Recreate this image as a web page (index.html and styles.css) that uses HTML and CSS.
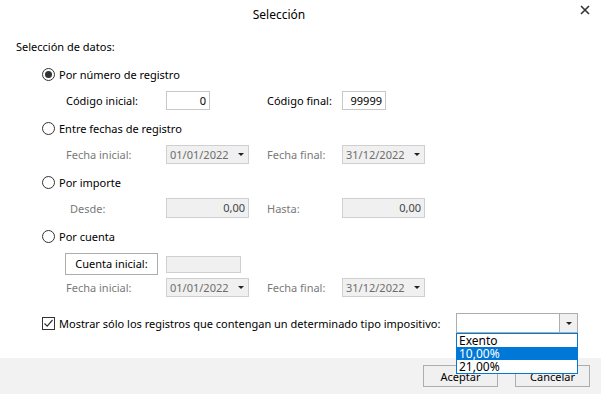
FILE: index.html
```html
<!DOCTYPE html>
<html lang="es">
<head>
    <meta charset="UTF-8">
    <title>Selección</title>
    <link rel="stylesheet" href="styles.css">
</head>
<body>
    <div class="dialog">
        <div class="titlebar">
            <span class="title">Selección</span>
            <span class="close">
                <svg width="10" height="10" viewBox="0 0 10 10"><path d="M1 1L9 9M9 1L1 9" stroke="#333" stroke-width="1.6"/></svg>
            </span>
        </div>

        <div class="content">
            <div class="section-label">Selección de datos:</div>

            <div class="option"><span class="radio checked"></span>Por número de registro</div>
            <div class="fields">
                <span class="field-label">Código inicial:</span>
                <span class="input code">0</span>
                <span class="field-label">Código final:</span>
                <span class="input code">99999</span>
            </div>

            <div class="option"><span class="radio"></span>Entre fechas de registro</div>
            <div class="fields disabled">
                <span class="field-label">Fecha inicial:</span>
                <span class="date">01/01/2022<i class="caret"></i></span>
                <span class="field-label">Fecha final:</span>
                <span class="date">31/12/2022<i class="caret"></i></span>
            </div>

            <div class="option"><span class="radio"></span>Por importe</div>
            <div class="fields disabled">
                <span class="field-label indent">Desde:</span>
                <span class="input amount">0,00</span>
                <span class="field-label">Hasta:</span>
                <span class="input amount">0,00</span>
            </div>

            <div class="option"><span class="radio"></span>Por cuenta</div>
            <div class="fields account">
                <span class="btn-account">Cuenta inicial:</span>
                <span class="input account-input"></span>
            </div>
            <div class="fields disabled tight">
                <span class="field-label">Fecha inicial:</span>
                <span class="date">01/01/2022<i class="caret"></i></span>
                <span class="field-label">Fecha final:</span>
                <span class="date">31/12/2022<i class="caret"></i></span>
            </div>

            <div class="check-row">
                <span class="checkbox">
                    <svg width="11" height="11" viewBox="0 0 11 11"><path d="M1.5 5.5L4.2 8.2L9.5 2" fill="none" stroke="#333" stroke-width="1.2"/></svg>
                </span>
                <span class="check-label">Mostrar sólo los registros que contengan un determinado tipo impositivo:</span>
                <div class="combo">
                    <span class="combo-value"></span>
                    <span class="combo-btn"><i class="caret"></i></span>
                    <ul class="combo-list">
                        <li>Exento</li>
                        <li class="selected">10,00%</li>
                        <li>21,00%</li>
                    </ul>
                </div>
            </div>
        </div>

        <div class="footer">
            <button class="btn">Aceptar</button>
            <button class="btn">Cancelar</button>
        </div>
    </div>
</body>
</html>
```

FILE: styles.css
```css
body {
    margin: 0;
    font-family: "Noto Sans", "Open Sans", sans-serif;
    font-size: 11px;
    color: #000;
    background-color: white;
}
.dialog {
    width: 601px;
    height: 394px;
    overflow: hidden;
    display: flex;
    flex-direction: column;
}
.titlebar {
    height: 28px;
    display: flex;
    align-items: center;
    position: relative;
}
.title {
    flex: 1;
    text-align: center;
    padding-right: 43px;
    font-size: 12px;
}
.close {
    position: absolute;
    right: 11px;
    top: 3px;
}
.content {
    padding-left: 16px;
    flex: 1;
}
.section-label {
    height: 36px;
    display: flex;
    align-items: center;
}
.option {
    height: 20px;
    display: flex;
    align-items: center;
    gap: 4px;
    margin-left: 26px;
    margin-top: 8px;
}
.section-label + .option {
    margin-top: 0;
}
.radio {
    width: 11px;
    height: 11px;
    border: 1px solid #333;
    border-radius: 50%;
    position: relative;
}
.radio.checked::after {
    content: "";
    position: absolute;
    left: 2px;
    top: 2px;
    width: 7px;
    height: 7px;
    border-radius: 50%;
    background-color: #333;
}
.fields {
    display: grid;
    grid-template-columns: 100px 101px 75px auto;
    align-items: center;
    height: 20px;
    margin-left: 50px;
    margin-top: 6px;
}
.fields.disabled .field-label {
    color: #7a7a7a;
}
.fields.tight {
    margin-top: 2px;
}
.field-label.indent {
    padding-left: 4px;
}
.input {
    box-sizing: border-box;
    height: 19px;
    border: 1px solid #c8c8c8;
    text-align: right;
    padding-right: 3px;
    line-height: 17px;
}
.input.code {
    width: 44px;
}
.input.amount {
    width: 83px;
    height: 20px;
    line-height: 18px;
    background-color: #f0f0f0;
    border-color: #cfcfcf;
    color: #444;
}
.date {
    box-sizing: border-box;
    width: 83px;
    height: 19px;
    border: 1px solid #cfcfcf;
    background-color: #f0f0f0;
    color: #6d6d6d;
    padding-left: 3px;
    line-height: 17px;
    display: flex;
    align-items: center;
    justify-content: space-between;
    padding-right: 4px;
}
.caret {
    width: 0;
    height: 0;
    border-left: 3px solid transparent;
    border-right: 3px solid transparent;
    border-top: 3px solid #222;
}
.fields.account {
    display: flex;
    gap: 8px;
    height: 22px;
    margin-left: 49px;
    margin-top: 7px;
}
.btn-account {
    box-sizing: border-box;
    width: 93px;
    height: 22px;
    border: 1px solid #adadad;
    text-align: center;
    line-height: 20px;
}
.input.account-input {
    width: 75px;
    height: 17px;
    background-color: #f0f0f0;
    border-color: #cfcfcf;
}
.check-row {
    display: flex;
    align-items: center;
    height: 20px;
    margin-left: 26px;
    margin-top: 16px;
}
.checkbox {
    box-sizing: border-box;
    width: 13px;
    height: 13px;
    border: 1px solid #333;
    display: flex;
    align-items: center;
    justify-content: center;
    margin-right: 4px;
}
.check-label {
    width: 397px;
    white-space: nowrap;
}
.combo {
    position: relative;
    box-sizing: border-box;
    width: 122px;
    height: 20px;
    border: 1px solid #adadad;
    display: flex;
}
.combo-value {
    flex: 1;
}
.combo-btn {
    width: 17px;
    border-left: 1px solid #adadad;
    background-color: #f0f0f0;
    display: flex;
    align-items: center;
    justify-content: center;
}
.combo-list {
    position: absolute;
    left: -1px;
    top: 19px;
    width: 122px;
    box-sizing: border-box;
    margin: 0;
    padding: 0;
    list-style: none;
    border: 1px solid #0078d7;
    background-color: white;
    z-index: 2;
    font-size: 12px;
}
.combo-list li {
    height: 13px;
    line-height: 13px;
    padding-left: 2px;
}
.combo-list li.selected {
    background-color: #0078d7;
    color: white;
}
.footer {
    height: 36px;
    background-color: #f2f2f2;
    display: flex;
    justify-content: flex-end;
    gap: 17px;
    padding-right: 11px;
    padding-top: 7px;
    box-sizing: border-box;
}
.btn {
    width: 75px;
    height: 22px;
    border: 1px solid #adadad;
    background-color: #f0f0f0;
    font-family: inherit;
    font-size: 11px;
    padding: 0;
}
```
